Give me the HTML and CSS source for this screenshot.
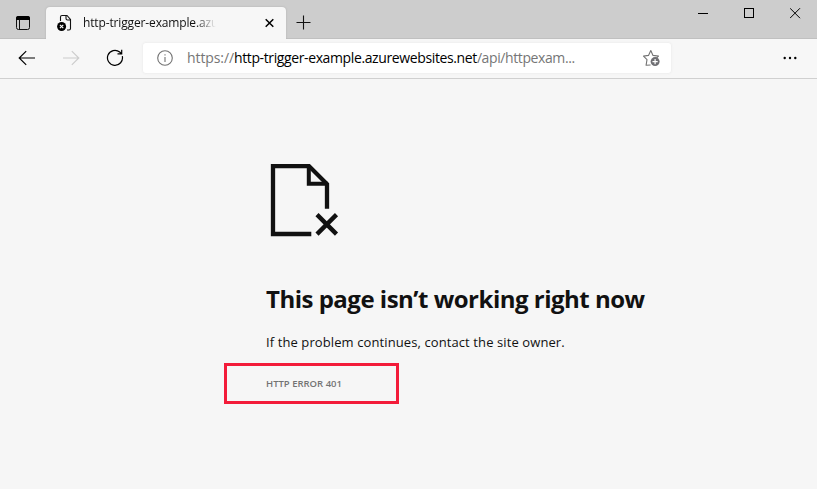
FILE: index.html
```html
<!DOCTYPE html>
<html lang="en">
<head>
<meta charset="utf-8">
<title>http-trigger-example.azurewebsites.net</title>
<link rel="stylesheet" href="styles.css">
</head>
<body>
<div class="browser">
  <header class="titlebar">
    <button class="tab-actions" aria-label="Tab actions">
      <svg width="16" height="16" viewBox="0 0 16 16"><rect x="1.500" y="1.500" width="13" height="13" rx="2" fill="none" stroke="#111"/><path d="M1 5V3a2 2 0 0 1 2-2h10a2 2 0 0 1 2 2v2z" fill="#000"/><path d="M4.500 5v9" stroke="#111"/></svg>
    </button>
    <div class="tab">
      <svg class="favicon" width="16" height="18" viewBox="0 0 16 18"><path d="M3.500 7V3a1.500 1.500 0 0 1 1.500-1.500h5L13.500 5.500v9a1.500 1.500 0 0 1-1.500 1.500H10M9 1.500V4.500a1.500 1.500 0 0 0 1.500 1.500h3" fill="none" stroke="#111" stroke-width="1.100"/><circle cx="4.600" cy="12.500" r="4.500" fill="#000"/><path d="M2.900 10.800l3.400 3.400m0-3.400l-3.400 3.400" stroke="#fff" stroke-width="1.100"/></svg>
      <span class="tab-title">http-trigger-example.azu</span>
      <svg class="tab-close" width="10" height="10" viewBox="-.5 0 10 10"><path d="M1.200 1.200l7.600 7.600m0-7.600l-7.600 7.600" stroke="#000" stroke-width="1.500"/></svg>
    </div>
    <svg class="new-tab" width="15" height="15" viewBox="0 0 15 15"><path d="M7.500.5v14M.5 7.500h14" stroke="#111" stroke-width="1.100"/></svg>
    <div class="window-controls">
      <svg width="11" height="11" viewBox="0 0 11 11"><path d="M0 5.500h10" stroke="#000"/></svg>
      <svg width="11" height="11" viewBox="0 0 11 11"><rect x=".5" y=".5" width="9" height="9" fill="none" stroke="#000"/></svg>
      <svg width="11" height="11" viewBox="0 0 11 11"><path d="M0 .2l10 10m0-10l-10 10" stroke="#000"/></svg>
    </div>
  </header>
  <nav class="toolbar">
    <svg class="back" width="18" height="16" viewBox="0 0 18 16"><path d="M17 8H1.500M8.200 1.200L1.200 8l7 6.800" fill="none" stroke="#000" stroke-width="1.150"/></svg>
    <svg class="forward" width="18" height="16" viewBox="0 0 18 16"><path d="M1 8h15.500M9.800 1.200l7 6.800-7 6.800" fill="none" stroke="#ccc" stroke-width="1.150"/></svg>
    <svg class="reload" width="18" height="18" viewBox="0 0 18 18"><path d="M16.300 7.200A7.500 7.500 0 1 1 13.700 3l1.600 1.500M15.700.8v4H11.500" fill="none" stroke="#000" stroke-width="1.200"/></svg>
    <div class="address">
      <svg class="info" width="16" height="16" viewBox="0 0 16 16"><circle cx="8" cy="8" r="7.300" fill="none" stroke="#737373" stroke-width="1.100"/><path d="M8 7v5M8 4.200v1.300" stroke="#737373" stroke-width="1.100"/></svg>
      <span class="url"><span class="scheme">https://</span><span class="host">http-trigger-example.azurewebsites.net</span><span class="path">/api/httpexam...</span></span>
      <svg class="star" width="18" height="18" viewBox="-.6 0 18 18"><path d="M8 16l-4.500.2.900-5.500L.9 7.100l5-.7L8.200 1.500l2.200 4.900 5.500.7-2 2" fill="none" stroke="#737373" stroke-width="1.100" stroke-linejoin="round"/><circle cx="12.500" cy="12.600" r="4.500" fill="#6e6e72"/><path d="M12.500 10v5.200M9.900 12.600h5.200" stroke="#fff" stroke-width="1.200"/></svg>
    </div>
    <svg class="more" width="14" height="4" viewBox="0 0 14 4"><circle cx="1.700" cy="2" r="1.200"/><circle cx="7" cy="2" r="1.200"/><circle cx="12.300" cy="2" r="1.200"/></svg>
  </nav>
  <main class="page">
    <svg class="broken-page" width="70" height="74" viewBox="-.8 -.8 70 74"><path d="M41.500 70.200H3.200V2.300h36l18 18V45" fill="none" stroke="#111" stroke-width="4.300"/><path d="M39 2v18h19" fill="none" stroke="#111" stroke-width="4"/><path d="M47.200 50.800l19.500 19.500m0-19.500L47.200 70.300" stroke="#111" stroke-width="4.400"/></svg>
    <h1>This page isn’t working right now</h1>
    <p class="message">If the problem continues, contact the site owner.</p>
    <div class="error-frame"><span class="code">HTTP ERROR 401</span></div>
  </main>
</div>
</body>
</html>
```

FILE: styles.css
```css
* { box-sizing: border-box; }
body { margin: 0; font-family: "Open Sans", "Noto Sans", sans-serif; color: #111; background: #f6f6f6; }
svg { display: block; flex: none; }
span { white-space: nowrap; }
.browser { height: 489px; display: flex; flex-direction: column; overflow: hidden; }
.titlebar { height: 39px; flex: none; display: flex; background: #cdcdcd; box-shadow: inset 0 -1px #c0c0c0; }
.tab-actions { width: 46px; height: 31px; padding: 15px 0 0 15px; border: 0; background: none; display: flex; align-items: flex-start; }
.tab { width: 240px; height: 32px; margin-top: 7px; padding: 0 12px 0 11px; display: flex; align-items: center; background: #f7f7f7; border-radius: 4px 4px 0 0; box-shadow: 0 0 2px #aaa; clip-path: inset(-3px -3px 0 -3px); }
.tab-title { margin-left: 10px; width: 136px; font-size: 12px; line-height: 18px; letter-spacing: -0.14px; color: #111; -webkit-mask-image: linear-gradient(90deg, #000 112px, transparent 133px); mask-image: linear-gradient(90deg, #000 112px, transparent 133px); }
.tab-close { margin-left: auto; }
.new-tab { margin: 15px 0 0 10px; }
.window-controls { margin: 8px 16px 0 auto; display: flex; gap: 35px; }
.toolbar { height: 40px; flex: none; display: flex; align-items: center; padding: 0 20px 2px 18px; background: #f7f7f7; border-bottom: 1px solid #d0d0d0; }
.forward { margin-left: 26px; }
.reload { margin-left: 26px; }
.address { width: 528px; height: 30px; margin-left: 19px; padding: 0 11px 0 14px; display: flex; align-items: center; background: #fff; border-radius: 3px; box-shadow: 0 0 3px #e4e4e4; }
.url { margin-left: 14px; font-size: 14px; line-height: 20px; color: #000; }
.scheme, .path { color: #767676; }
.scheme { letter-spacing: -0.1px; }
.host { letter-spacing: -0.38px; }
.path { letter-spacing: -0.4px; }
.star { margin-left: auto; }
.more { margin-left: auto; }
.page { flex: 1; padding: 84px 0 0 266px; background: #f6f6f6; }
.broken-page { margin-left: 3px; }
h1 { margin: 44px 0 0; font-size: 24px; line-height: 36px; font-weight: 700; letter-spacing: -0.5px; white-space: nowrap; }
.message { margin: 15px 0 0; font-size: 13px; line-height: 20px; letter-spacing: 0.1px; white-space: nowrap; }
.error-frame { width: 175px; height: 41px; margin: 11px 0 0 -42px; padding: 0 0 0 39px; display: flex; align-items: center; border: 3px solid #f31b39; }
.code { font-size: 9.500px; line-height: 15px; font-weight: 600; letter-spacing: 0; color: #737373; }
```
